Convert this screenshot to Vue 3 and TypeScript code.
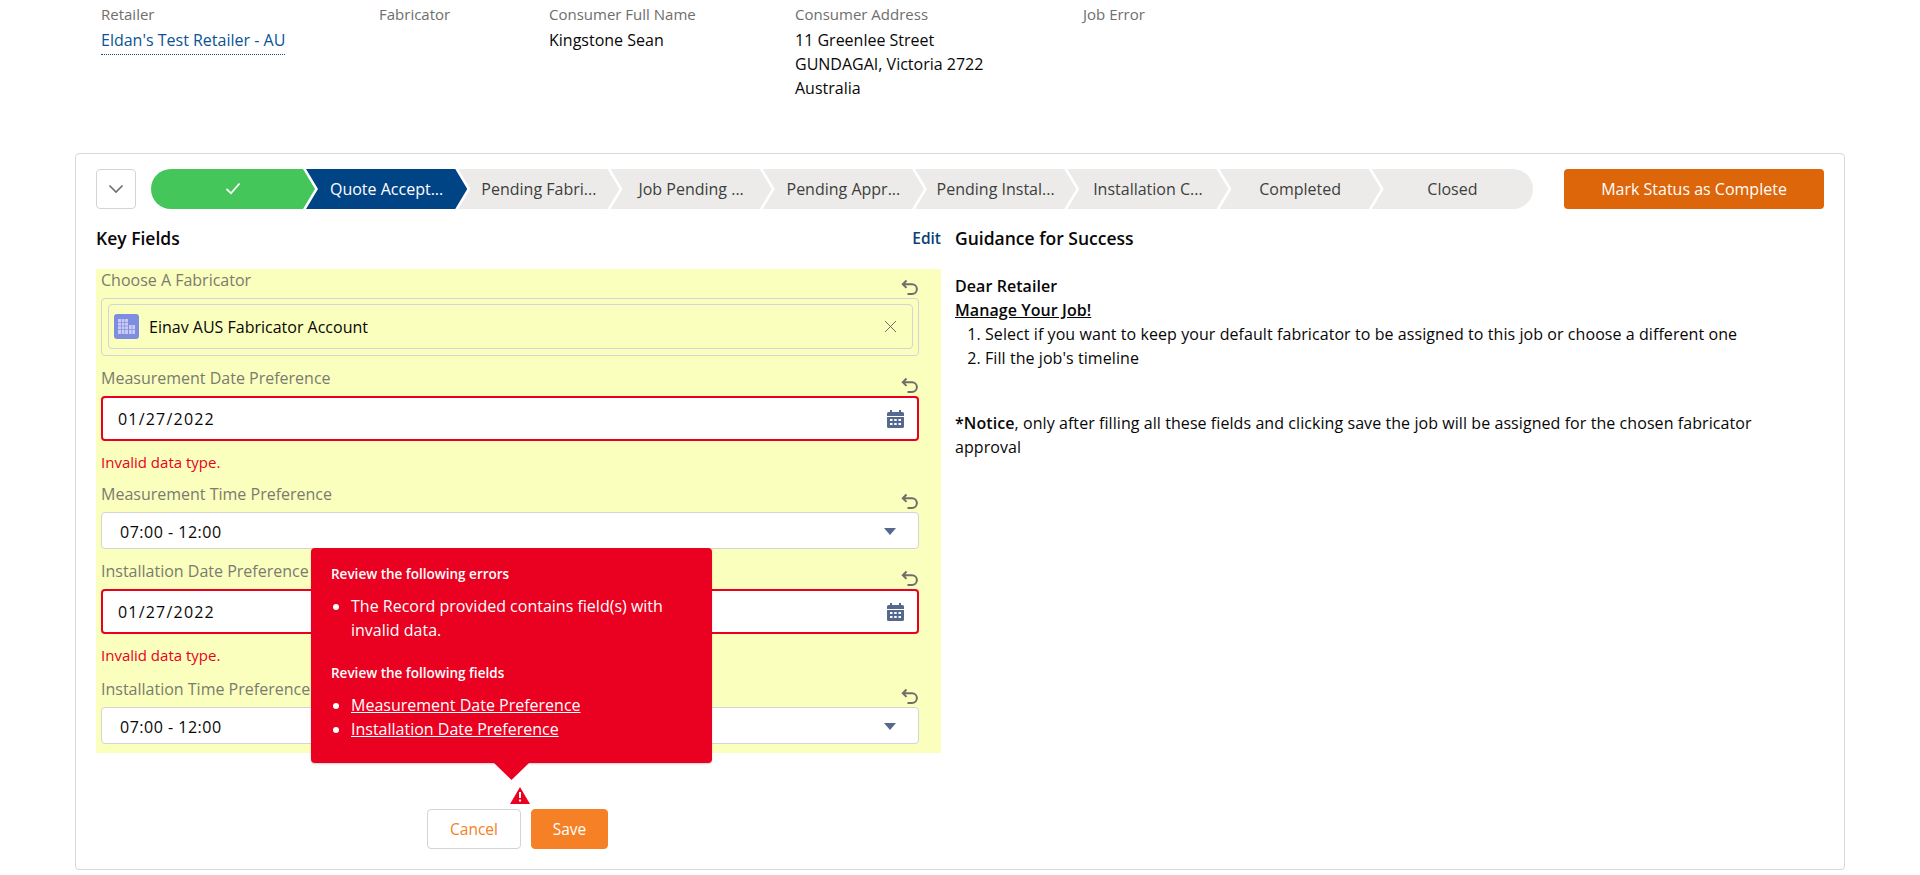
<script setup lang="ts">
const topFields = [
  { label: "Retailer", lines: ["Eldan's Test Retailer - AU"], link: true },
  { label: "Fabricator", lines: [] },
  { label: "Consumer Full Name", lines: ["Kingstone Sean"] },
  { label: "Consumer Address", lines: ["11 Greenlee Street", "GUNDAGAI, Victoria 2722", "Australia"] },
  { label: "Job Error", lines: [] },
];

const stages = [
  "Quote Accept...",
  "Pending Fabri...",
  "Job Pending ...",
  "Pending Appr...",
  "Pending Instal...",
  "Installation C...",
  "Completed",
  "Closed",
];
</script>

<template>
  <div class="page">
    <div class="top-fields">
      <div v-for="f in topFields" :key="f.label" class="top-field">
        <div class="top-label">{{ f.label }}</div>
        <a v-if="f.link" class="top-link">{{ f.lines[0] }}</a>
        <template v-else>
          <div v-for="line in f.lines" :key="line" class="top-value">{{ line }}</div>
        </template>
      </div>
    </div>

    <div class="card">
      <div class="path-row">
        <button class="toggle">
          <svg width="16" height="10" viewBox="0 0 16 10"><path d="M1.5 1.5 8 8l6.5-6.5" fill="none" stroke="#706e6b" stroke-width="1.6" /></svg>
        </button>
        <div class="path">
          <div class="stage done">
            <svg width="16" height="13" viewBox="0 0 16 13"><path d="M1.5 7 6 11.3 14.5 1.5" fill="none" stroke="#fff" stroke-width="1.8" /></svg>
          </div>
          <div
            v-for="(s, i) in stages"
            :key="s"
            class="stage"
            :class="{ current: i === 0, last: i === stages.length - 1 }"
          >{{ s }}</div>
        </div>
        <button class="mark">Mark Status as Complete</button>
      </div>

      <div class="columns">
        <div class="left">
          <div class="head-row">
            <h2>Key Fields</h2>
            <a class="edit">Edit</a>
          </div>

          <div class="panel">
            <div class="label-row">
              <span>Choose A Fabricator</span>
              <svg class="undo" width="18" height="18" viewBox="0 0 18 18"><path d="M5.5 1.5 1.8 5.2l3.7 3.7M2 5.2h9a4.9 4.9 0 0 1 0 9.8H6.5" fill="none" stroke="#706e6b" stroke-width="2" /></svg>
            </div>
            <div class="lookup">
              <div class="pill">
                <span class="acct">
                  <svg width="17" height="15" viewBox="0 0 17 15" fill="#c9cdf4">
                    <path d="M0 0h10v15H0zM11 6h6v9h-6z" />
                    <path d="M3.500 0v15M6.700 0v15M0 3.500h10M0 7h10M0 10.500h10M14 6v9M11 10.500h6" stroke="#8a92e6" stroke-width=".8" />
                  </svg>
                </span>
                <span class="pill-text">Einav AUS Fabricator Account</span>
                <svg width="13" height="13" viewBox="0 0 13 13"><path d="M1 1l11 11M12 1 1 12" stroke="#706e6b" stroke-width="1" /></svg>
              </div>
            </div>

            <div class="label-row gap">
              <span>Measurement Date Preference</span>
              <svg class="undo" width="18" height="18" viewBox="0 0 18 18"><path d="M5.5 1.5 1.8 5.2l3.7 3.7M2 5.2h9a4.9 4.9 0 0 1 0 9.8H6.5" fill="none" stroke="#706e6b" stroke-width="2" /></svg>
            </div>
            <div class="input bad">
              <span>01/27/2022</span>
              <svg width="17" height="18" viewBox="0 0 17 18" fill="#54698d">
                <path d="M3 0h2v2h7V0h2v2h1.500A1.500 1.500 0 0 1 17 3.500V6H0V3.500A1.500 1.500 0 0 1 1.500 2H3z" />
                <path d="M0 7h17v9.500a1.500 1.500 0 0 1-1.500 1.500h-14A1.500 1.500 0 0 1 0 16.500zm3 2v2h2.500V9zm4.200 0v2h2.500V9zm4.300 0v2H14V9zm-8.500 4v2h2.500v-2zm4.200 0v2h2.500v-2zm4.300 0v2H14v-2z" fill-rule="evenodd" />
              </svg>
            </div>
            <div class="error">Invalid data type.</div>

            <div class="label-row gap">
              <span>Measurement Time Preference</span>
              <svg class="undo" width="18" height="18" viewBox="0 0 18 18"><path d="M5.5 1.5 1.8 5.2l3.7 3.7M2 5.2h9a4.9 4.9 0 0 1 0 9.8H6.5" fill="none" stroke="#706e6b" stroke-width="2" /></svg>
            </div>
            <div class="combo">
              <span>07:00 - 12:00</span>
              <svg width="12" height="7" viewBox="0 0 12 7"><path d="M0 0h12L6 7z" fill="#54698d" /></svg>
            </div>

            <div class="label-row gap">
              <span>Installation Date Preference</span>
              <svg class="undo" width="18" height="18" viewBox="0 0 18 18"><path d="M5.5 1.5 1.8 5.2l3.7 3.7M2 5.2h9a4.9 4.9 0 0 1 0 9.8H6.5" fill="none" stroke="#706e6b" stroke-width="2" /></svg>
            </div>
            <div class="input bad">
              <span>01/27/2022</span>
              <svg width="17" height="18" viewBox="0 0 17 18" fill="#54698d">
                <path d="M3 0h2v2h7V0h2v2h1.500A1.500 1.500 0 0 1 17 3.500V6H0V3.500A1.500 1.500 0 0 1 1.500 2H3z" />
                <path d="M0 7h17v9.500a1.500 1.500 0 0 1-1.500 1.500h-14A1.500 1.500 0 0 1 0 16.500zm3 2v2h2.500V9zm4.200 0v2h2.500V9zm4.300 0v2H14V9zm-8.500 4v2h2.500v-2zm4.200 0v2h2.500v-2zm4.300 0v2H14v-2z" fill-rule="evenodd" />
              </svg>
            </div>
            <div class="error">Invalid data type.</div>

            <div class="label-row gap-last">
              <span>Installation Time Preference</span>
              <svg class="undo" width="18" height="18" viewBox="0 0 18 18"><path d="M5.5 1.5 1.8 5.2l3.7 3.7M2 5.2h9a4.9 4.9 0 0 1 0 9.8H6.5" fill="none" stroke="#706e6b" stroke-width="2" /></svg>
            </div>
            <div class="combo">
              <span>07:00 - 12:00</span>
              <svg width="12" height="7" viewBox="0 0 12 7"><path d="M0 0h12L6 7z" fill="#54698d" /></svg>
            </div>
          </div>

          <div class="footer">
            <svg class="warn" width="20" height="17" viewBox="0 0 20 17">
              <path d="M10 0 20 17H0z" fill="#ea0020" />
              <path d="M9 5h2v6H9zM9 12.500h2v2H9z" fill="#fff" />
            </svg>
            <button class="cancel">Cancel</button>
            <button class="save">Save</button>
          </div>

          <div class="popover">
            <h3>Review the following errors</h3>
            <ul>
              <li>The Record provided contains field(s) with invalid data.</li>
            </ul>
            <h3 class="second">Review the following fields</h3>
            <ul>
              <li><a>Measurement Date Preference</a></li>
              <li><a>Installation Date Preference</a></li>
            </ul>
          </div>
        </div>

        <div class="right">
          <div class="head-row">
            <h2>Guidance for Success</h2>
          </div>
          <div class="guide">
            <div class="strong">Dear Retailer</div>
            <div class="strong under">Manage Your Job!</div>
            <ol>
              <li>Select if you want to keep your default fabricator to be assigned to this job or choose a different one</li>
              <li>Fill the job's timeline</li>
            </ol>
            <p><b class="strong">*Notice</b>, only after filling all these fields and clicking save the job will be assigned for the chosen fabricator approval</p>
          </div>
        </div>
      </div>
    </div>
  </div>
</template>

<style>
html,
body {
  margin: 0;
  background: #fff;
}
</style>

<style scoped>
.page {
  font-family: "Open Sans", "Lato", sans-serif;
  font-size: 16px;
  line-height: 24px;
  color: #080707;
  height: 875px;
  overflow: hidden;
}

.top-fields {
  display: flex;
  height: 153px;
  padding: 2px 0 0 101px;
  box-sizing: border-box;
}

.top-field {
  width: 170px;
}

.top-field:nth-child(1) {
  width: 278px;
}

.top-field:nth-child(3) {
  width: 246px;
}

.top-field:nth-child(4) {
  width: 288px;
}

.top-label {
  color: #706e6b;
  font-size: 15px;
  margin-bottom: 2px;
}

.top-link {
  display: inline-block;
  color: #0b5394;
  line-height: 23px;
  border-bottom: 1px dotted #0b5394;
  padding-bottom: 2px;
}

.card {
  height: 717px;
  margin: 0 75px;
  padding: 15px 20px 0;
  box-sizing: border-box;
  border: 1px solid #d8d8d8;
  border-radius: 4px;
}

.path-row {
  display: flex;
  align-items: center;
  height: 40px;
}

.toggle {
  width: 40px;
  height: 40px;
  padding: 0;
  flex: none;
  background: #fff;
  border: 1px solid #d4d4d4;
  border-radius: 4px;
  margin-right: 15px;
}

.path {
  flex: 1;
  display: flex;
  height: 40px;
  min-width: 0;
}

.stage {
  flex: 1 1 0;
  min-width: 0;
  display: flex;
  align-items: center;
  justify-content: center;
  white-space: nowrap;
  background: #ecebea;
  color: #3e3e3c;
  padding-bottom: 1px;
  box-sizing: border-box;
  margin-right: -9px;
  clip-path: polygon(0 0, calc(100% - 12px) 0, 100% 50%, calc(100% - 12px) 100%, 0 100%, 12px 50%);
}

.stage.done {
  flex: 0 0 164px;
  background: #45c65a;
  border-radius: 20px 0 0 20px;
  clip-path: polygon(0 0, calc(100% - 12px) 0, 100% 50%, calc(100% - 12px) 100%, 0 100%);
}

.stage.current {
  background: #014486;
  color: #fff;
}

.stage.last {
  margin-right: 0;
  border-radius: 0 20px 20px 0;
  clip-path: polygon(0 0, 100% 0, 100% 100%, 0 100%, 12px 50%);
}

.mark {
  width: 260px;
  height: 40px;
  flex: none;
  margin-left: 31px;
  background: #dd650a;
  border: 0;
  border-radius: 4px;
  color: #fff;
  font: inherit;
}

.columns {
  display: flex;
  gap: 14px;
}

.left {
  width: 845px;
  flex: none;
  position: relative;
}

.right {
  flex: 1;
  min-width: 0;
}

.head-row {
  display: flex;
  justify-content: space-between;
  align-items: center;
  height: 24px;
  padding-top: 17px;
  margin-bottom: 19px;
}

h2 {
  margin: 0;
  font-size: 17.5px;
  font-weight: 600;
}

.edit {
  color: #0b3f78;
  font-size: 15.5px;
  font-weight: 600;
}

.panel {
  background: #faffbd;
  padding: 1px 22px 9px 5px;
}

.label-row {
  display: flex;
  justify-content: space-between;
  height: 28px;
  line-height: 20px;
  color: #7b7b70;
}

.label-row.gap {
  margin-top: 12px;
}

.label-row.gap-last {
  margin-top: 14px;
}

.undo {
  margin-top: 9px;
}

.lookup {
  height: 58px;
  box-sizing: border-box;
  padding: 5px 5px 6px 6px;
  border: 1px solid #d4d4d4;
  border-radius: 4px;
}

.pill {
  display: flex;
  align-items: center;
  height: 100%;
  box-sizing: border-box;
  padding: 0 15px 0 5px;
  border: 1px solid #d4d4d4;
  border-radius: 4px;
}

.acct {
  width: 25px;
  height: 25px;
  flex: none;
  display: flex;
  align-items: center;
  justify-content: center;
  border-radius: 3px;
  background: #7f8de1;
  margin-right: 10px;
}

.pill-text {
  flex: 1;
}

.input,
.combo {
  display: flex;
  align-items: center;
  justify-content: space-between;
  box-sizing: border-box;
  background: #fff;
  border-radius: 4px;
}

.input {
  height: 45px;
  padding: 0 13px 0 15px;
  letter-spacing: 1.2px;
}

.input.bad {
  border: 2px solid #ea001e;
}

.combo {
  height: 37px;
  padding: 2px 22px 0 18px;
  letter-spacing: 0.5px;
  border: 1px solid #d4d4d4;
}

.error {
  margin-top: 11px;
  line-height: 20px;
  font-size: 15px;
  color: #ea001e;
}

.footer {
  position: relative;
  display: flex;
  justify-content: center;
  gap: 10px;
  margin-top: 56px;
}

.warn {
  position: absolute;
  left: 414px;
  top: -22px;
}

.cancel,
.save {
  height: 40px;
  border-radius: 4px;
  font: inherit;
  font-size: 15.5px;
  padding: 0;
}

.cancel {
  width: 94px;
  margin-left: -2px;
  background: #fff;
  border: 1px solid #d4d4d4;
  color: #f58025;
}

.save {
  width: 77px;
  background: #f58025;
  border: 1px solid #f58025;
  color: #fff;
}

.popover {
  position: absolute;
  left: 215px;
  top: 339px;
  width: 401px;
  height: 215px;
  box-sizing: border-box;
  padding: 14px 20px;
  background: #ea0020;
  color: #fff;
  border-radius: 4px;
  box-shadow: 0 1px 2px rgba(0, 0, 0, 0.2);
}

.popover::after {
  content: "";
  position: absolute;
  left: 183px;
  bottom: -17px;
  width: 35px;
  height: 17px;
  background: #ea0020;
  clip-path: polygon(0 0, 100% 0, 50% 100%);
}

h3 {
  margin: 0 0 8px;
  font-size: 13.5px;
  font-weight: 600;
}

h3.second {
  margin-top: 19px;
}

ul {
  margin: 0;
  padding-left: 20px;
}

.popover a {
  text-decoration: underline;
}

.guide {
  line-height: 24px;
  letter-spacing: 0.07px;
  padding: 5px 60px 0 0;
}

.strong {
  font-weight: 600;
}

.under {
  text-decoration: underline;
}

ol {
  margin: 0;
  padding-left: 30px;
}

p {
  margin: 41px 0 0;
}
</style>
